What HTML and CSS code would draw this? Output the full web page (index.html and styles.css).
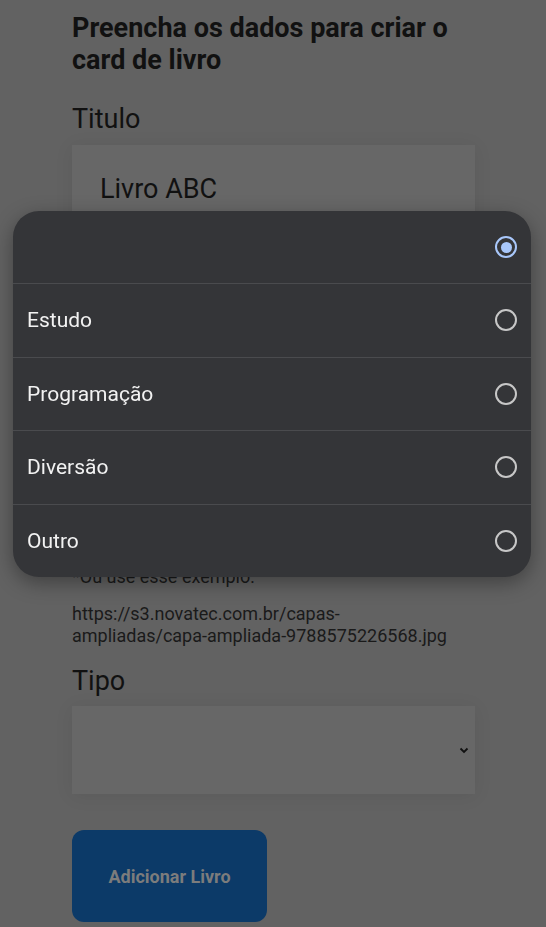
FILE: index.html
```html
<!DOCTYPE html>
<html lang="pt-BR">
<head>
<meta charset="utf-8">
<title>Card de livro</title>
<link rel="stylesheet" href="styles.css">
</head>
<body>
<main class="page">
  <h1 class="heading">Preencha os dados para criar o card de livro</h1>

  <label class="label label-first">Titulo</label>
  <div class="input"><span class="input-text">Livro ABC</span></div>

  <label class="label">Autor</label>
  <div class="input"></div>

  <label class="label">URL da capa</label>
  <div class="input"></div>

  <p class="hint">*Ou use esse exemplo:</p>
  <p class="url">https://s3.novatec.com.br/capas-ampliadas/capa-ampliada-9788575226568.jpg</p>

  <label class="label label-tipo">Tipo</label>
  <div class="select">
    <svg class="chevron" width="10" height="7" viewBox="0 0 10 7"><polyline points="1.5,1.5 5,5 8.5,1.5" fill="none" stroke="#111" stroke-width="1.8"/></svg>
  </div>

  <button class="btn">Adicionar Livro</button>
</main>

<div class="picker">
  <div class="opt opt-first">
    <span class="opt-text"></span>
    <span class="radio radio-on"><span class="dot"></span></span>
  </div>
  <div class="opt"><span class="opt-text">Estudo</span><span class="radio"></span></div>
  <div class="opt"><span class="opt-text">Programação</span><span class="radio"></span></div>
  <div class="opt"><span class="opt-text">Diversão</span><span class="radio"></span></div>
  <div class="opt"><span class="opt-text">Outro</span><span class="radio"></span></div>
</div>
</body>
</html>
```

FILE: styles.css
```css
html, body {
  margin: 0;
  padding: 0;
  background: #626262;
  font-family: Roboto, "Noto Sans", sans-serif;
  color: #111;
  overflow: hidden;
}

.page {
  padding: 12px 71px 0 72px;
  display: flex;
  flex-direction: column;
  align-items: stretch;
}

.heading {
  margin: 0;
  font-size: 27px;
  line-height: 32px;
  font-weight: 700;
  color: #111;
}

.label {
  display: block;
  font-size: 27px;
  line-height: 30px;
  margin-top: 24px;
  margin-bottom: 11px;
  color: #111;
}

.label-first {
  margin-top: 28px;
}

.input {
  height: 88px;
  background: #676767;
  box-shadow: 0 2px 18px rgba(0, 0, 0, 0.07);
  display: flex;
  align-items: center;
  padding-left: 28px;
}

.input-text {
  font-size: 27px;
  color: #111;
}

.hint {
  margin: 27px 0 0;
  font-size: 18px;
  line-height: 22px;
  color: #1a1a1a;
}

.url {
  margin: 15px 0 0;
  font-size: 18px;
  line-height: 22px;
  color: #1a1a1a;
  max-width: 385px;
}

.label-tipo {
  margin-top: 19px;
  margin-bottom: 10px;
}

.select {
  height: 88px;
  background: #676767;
  box-shadow: 0 2px 18px rgba(0, 0, 0, 0.07);
  display: flex;
  align-items: center;
  justify-content: flex-end;
  padding-right: 6px;
}

.chevron {
  display: block;
}

.btn {
  margin-top: 36px;
  width: 195px;
  height: 92px;
  border: none;
  border-radius: 12px;
  background: #0c3a68;
  color: #7c7c7c;
  font-family: Roboto, sans-serif;
  font-weight: 700;
  font-size: 18px;
  padding: 0;
}

.picker {
  position: fixed;
  left: 13px;
  top: 211px;
  width: 518px;
  background: #343538;
  border-radius: 26px;
  overflow: hidden;
  box-shadow: 0 6px 20px rgba(0, 0, 0, 0.35);
}

.opt {
  height: 72.5px;
  display: flex;
  align-items: center;
  justify-content: space-between;
  padding: 0 14px 0 14px;
  border-top: 1px solid #4a4b4e;
}

.opt-first {
  height: 72px;
  border-top: none;
}

.opt-text {
  font-size: 21px;
  color: #f2f2f2;
}

.radio {
  width: 18px;
  height: 18px;
  border: 2px solid #c7c7c7;
  border-radius: 50%;
  display: flex;
  align-items: center;
  justify-content: center;
}

.radio-on {
  border-color: #a8c7fa;
}

.dot {
  width: 11px;
  height: 11px;
  border-radius: 50%;
  background: #a8c7fa;
}
```
